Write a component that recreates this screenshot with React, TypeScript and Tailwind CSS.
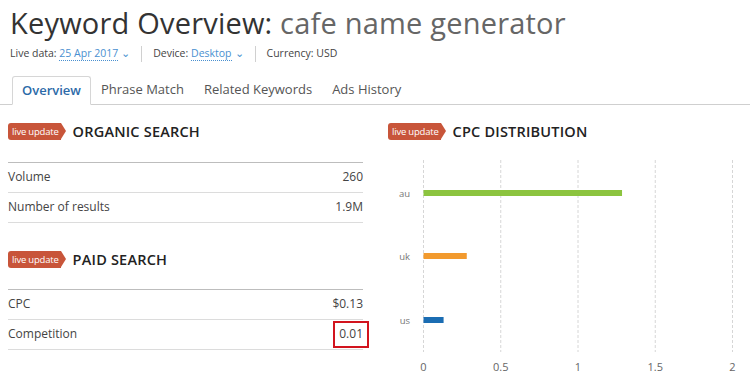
import React from 'react';

const FONT = { fontFamily: '"Open Sans", "Noto Sans", sans-serif' };

function LiveBadge() {
  return (
    <span className="relative inline-flex h-[17px] items-center rounded-l-[3px] bg-[#c8553a] pl-[4px] pr-[2px] text-[9.5px] leading-none tracking-[-0.2px] text-white">
      live update
      <span className="absolute right-[-5px] top-0 h-0 w-0 border-y-[8.5px] border-l-[5px] border-y-transparent border-l-[#c8553a]" />
    </span>
  );
}

function SectionTitle({ children }: { children: React.ReactNode }) {
  return (
    <div className="flex items-center gap-[12px]">
      <LiveBadge />
      <span className="text-[14.5px] font-semibold tracking-[0.2px] text-[#222]">{children}</span>
    </div>
  );
}

function Row({ label, value, boxed }: { label: string; value: string; boxed?: boolean }) {
  return (
    <div className="flex h-[30px] items-center justify-between border-b border-[#dcdcdc] text-[12px] text-[#444]">
      <span>{label}</span>
      {boxed ? (
        <span className="mr-[-6px] flex h-[27px] items-center border-2 border-[#d2141e] px-[4px]">{value}</span>
      ) : (
        <span>{value}</span>
      )}
    </div>
  );
}

const bars = [
  { label: 'au', value: 1.285, color: '#8cc43f', y: 43 },
  { label: 'uk', value: 0.28, color: '#f29a2e', y: 106 },
  { label: 'us', value: 0.13, color: '#1b6db3', y: 170 },
];

function Chart() {
  const x0 = 35;
  const unit = 154.5;
  return (
    <svg width="362" height="230" className="block">
      {[0, 0.5, 1, 1.5, 2].map((t) => (
        <g key={t}>
          <line
            x1={x0 + t * unit + 0.5}
            x2={x0 + t * unit + 0.5}
            y1={10}
            y2={202}
            stroke="#d6d6d6"
            strokeDasharray="3 2"
          />
          <text x={x0 + t * unit + 0.5} y={221} textAnchor="middle" fontSize="11" fill="#666" style={FONT}>
            {t}
          </text>
        </g>
      ))}
      {bars.map((b) => (
        <g key={b.label}>
          <text x={22} y={b.y + 4} textAnchor="end" fontSize="9.5" fill="#777" style={FONT}>
            {b.label}
          </text>
          <rect x={x0 + 0.5} y={b.y - 3} width={b.value * unit} height={6} fill={b.color} />
        </g>
      ))}
    </svg>
  );
}

export default function App() {
  return (
    <div className="h-[389px] w-[750px] overflow-hidden bg-white" style={FONT}>
      <div className="px-[10px] pt-[4px]">
        <h1 className="text-[29px] leading-[38px] tracking-[0.2px] text-[#333]">
          Keyword Overview: <span className="text-[#666]">cafe name generator</span>
        </h1>
        <div className="mt-[4px] flex items-center text-[10.5px] text-[#444]">
          <span>
            Live data:{' '}
            <span className="border-b border-dotted border-[#4a90d0] text-[#4a90d0]">25 Apr 2017</span>
            <span className="ml-[3px] text-[#4a90d0]">⌄</span>
          </span>
          <span className="mx-[11px] h-[16px] w-px bg-[#d0d0d0]" />
          <span>
            Device:{' '}
            <span className="border-b border-dotted border-[#4a90d0] text-[#4a90d0]">Desktop</span>
            <span className="ml-[3px] text-[#4a90d0]">⌄</span>
          </span>
          <span className="mx-[11px] h-[16px] w-px bg-[#d0d0d0]" />
          <span>Currency: USD</span>
        </div>
      </div>

      <div className="mt-[13px] flex items-end border-b border-[#cfcfcf] pl-[12px] text-[13px] text-[#555]">
        <div className="mb-[-1px] flex h-[29px] items-center rounded-t-[3px] border border-b-white border-[#d6d6d6] bg-white px-[9px] font-semibold text-[#2c6aa8]">
          Overview
        </div>
        <div className="flex h-[29px] items-center px-[10px]">Phrase Match</div>
        <div className="flex h-[29px] items-center px-[10px]">Related Keywords</div>
        <div className="flex h-[29px] items-center px-[10px]">Ads History</div>
      </div>

      <div className="flex pl-[8px] pt-[16px]">
        <div className="w-[355px]">
          <SectionTitle>ORGANIC SEARCH</SectionTitle>
          <div className="mt-[19px] border-t border-[#bdbdbd]">
            <Row label="Volume" value="260" />
            <Row label="Number of results" value="1.9M" />
          </div>
          <div className="mt-[26px]">
            <SectionTitle>PAID SEARCH</SectionTitle>
          </div>
          <div className="mt-[18px] border-t border-[#bdbdbd]">
            <Row label="CPC" value="$0.13" />
            <Row label="Competition" value="0.01" boxed />
          </div>
        </div>
        <div className="ml-[25px]">
          <SectionTitle>CPC DISTRIBUTION</SectionTitle>
          <div className="mt-[7px]">
            <Chart />
          </div>
        </div>
      </div>
    </div>
  );
}
